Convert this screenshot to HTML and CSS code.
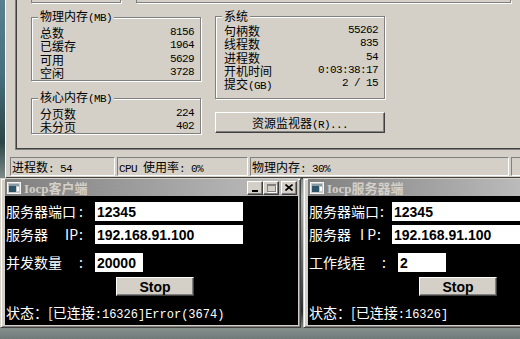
FILE: index.html
```html
<!DOCTYPE html>
<html lang="zh-CN">
<head>
    <meta charset="UTF-8">
    <title>Iocp</title>
    <link rel="stylesheet" href="styles.css">
</head>
<body>
    <div class="desktop">

        <!-- Task manager (performance tab, lower part) -->
        <div class="taskmgr">
            <div class="tabpanel">
                <div class="graphs">
                    <div class="graph graph-small"></div>
                    <div class="graph graph-wide"></div>
                </div>

                <div class="stats">
                    <div class="col">
                        <fieldset class="group g-phys">
                            <legend>物理内存<span class="v">(MB)</span></legend>
                            <div class="row"><span>总数</span><span class="v">8156</span></div>
                            <div class="row"><span>已缓存</span><span class="v">1964</span></div>
                            <div class="row"><span>可用</span><span class="v">5629</span></div>
                            <div class="row"><span>空闲</span><span class="v">3728</span></div>
                        </fieldset>
                        <fieldset class="group g-kernel">
                            <legend>核心内存<span class="v">(MB)</span></legend>
                            <div class="row"><span>分页数</span><span class="v">224</span></div>
                            <div class="row"><span>未分页</span><span class="v">402</span></div>
                        </fieldset>
                    </div>
                    <div class="col">
                        <fieldset class="group g-sys">
                            <legend>系统</legend>
                            <div class="row"><span>句柄数</span><span class="v">55262</span></div>
                            <div class="row"><span>线程数</span><span class="v">835</span></div>
                            <div class="row"><span>进程数</span><span class="v">54</span></div>
                            <div class="row"><span>开机时间</span><span class="v">0:03:38:17</span></div>
                            <div class="row"><span>提交<span class="v">(GB)</span></span><span class="v">2 / 15</span></div>
                        </fieldset>
                        <button class="btn-res">资源监视器<span class="v">(R)...</span></button>
                    </div>
                </div>
            </div>

            <div class="statusbar">
                <div class="cell cell-proc">进程数<span class="v">: 54</span></div>
                <div class="cell cell-cpu"><span class="v">CPU </span>使用率<span class="v">: 0%</span></div>
                <div class="cell cell-mem">物理内存<span class="v">: 30%</span></div>
                <div class="cell cell-rest"></div>
            </div>
        </div>

        <!-- Client window -->
        <div class="win client">
            <div class="titlebar">
                <svg class="title-icon" width="14" height="12" viewBox="0 0 14 12">
                    <rect x="0.5" y="0.5" width="13" height="11" fill="#c8c8c8" stroke="#f4f4f4"/>
                    <rect x="2" y="2" width="10" height="2" fill="#8a9aa4"/>
                    <rect x="2" y="4" width="7" height="6" fill="#2d5468"/>
                    <rect x="10" y="5" width="2" height="4" fill="#ffffff"/>
                </svg>
                <span class="title-text">Iocp客户端</span>
                <div class="caption">
                    <span class="cap-btn cap-min"><i></i></span>
                    <span class="cap-btn cap-max"><i></i></span>
                    <span class="cap-btn cap-close">
                        <svg width="8" height="7" viewBox="0 0 8 7"><path d="M0.5 0.5 L7.5 6.5 M7.5 0.5 L0.5 6.5" stroke="#000" stroke-width="1.6"/></svg>
                    </span>
                </div>
            </div>
            <div class="client-area">
                <div class="field">
                    <div class="lbl"><span>服务器端口</span></div><span class="colon">:</span>
                    <input class="input" type="text" value="12345">
                </div>
                <div class="field">
                    <div class="lbl"><span>服务器</span><span>IP</span></div><span class="colon">:</span>
                    <input class="input" type="text" value="192.168.91.100">
                </div>
                <div class="field spaced">
                    <div class="lbl"><span>并发数量</span></div><span class="colon">:</span>
                    <input class="input short" type="text" value="20000">
                </div>
                <div class="stop-row"><button class="btn-stop">Stop</button></div>
                <div class="state">状态：[已连接<span class="m">:16326]Error(3674)</span></div>
            </div>
        </div>

        <!-- Server window -->
        <div class="win server">
            <div class="titlebar">
                <svg class="title-icon" width="14" height="12" viewBox="0 0 14 12">
                    <rect x="0.5" y="0.5" width="13" height="11" fill="#c8c8c8" stroke="#f4f4f4"/>
                    <rect x="2" y="2" width="10" height="2" fill="#8a9aa4"/>
                    <rect x="2" y="4" width="7" height="6" fill="#2d5468"/>
                    <rect x="10" y="5" width="2" height="4" fill="#ffffff"/>
                </svg>
                <span class="title-text">Iocp服务器端</span>
            </div>
            <div class="client-area">
                <div class="field">
                    <div class="lbl"><span>服务器端口</span></div><span class="colon">:</span>
                    <input class="input" type="text" value="12345">
                </div>
                <div class="field">
                    <div class="lbl"><span>服务器</span><span>I P</span></div><span class="colon">:</span>
                    <input class="input" type="text" value="192.168.91.100">
                </div>
                <div class="field spaced">
                    <div class="lbl"><span>工作线程</span></div><span class="colon">:</span>
                    <input class="input short" type="text" value="2">
                </div>
                <div class="stop-row"><button class="btn-stop">Stop</button></div>
                <div class="state">状态：[已连接<span class="m">:16326]</span></div>
            </div>
        </div>

    </div>
</body>
</html>
```

FILE: styles.css
```css
* {
    box-sizing: border-box;
}

body {
    margin: 0;
    width: 520px;
    height: 339px;
    overflow: hidden;
    font-family: "Noto Sans CJK SC", sans-serif;
}

.desktop {
    position: relative;
    width: 520px;
    height: 339px;
    overflow: hidden;
    background: linear-gradient(to bottom, #5a7f90 0%, #46707e 22%, #2d4445 42%, #a9b1ae 58%, #26302f 92%, #848e8b 97%, #6f7b79 100%);
}

/* ---------- task manager ---------- */

.taskmgr {
    position: absolute;
    left: 5px;
    top: 0;
    width: 530px;
    height: 179px;
    background: #d4d0c8;
    border-left: 1px solid #ffffff;
    border-bottom: 2px solid #404040;
    color: #000;
    font-size: 12px;
}

.tabpanel {
    margin-left: 9px;
    height: 150px;
    padding-left: 15px;
    border-left: 1px solid #808080;
    border-bottom: 1px solid #808080;
    box-shadow: inset 1px -1px 0 #404040;
}

.graphs {
    display: flex;
    gap: 15px;
}

.graph {
    height: 3px;
    border: 1px solid #808080;
    border-top: 0;
    box-shadow: 1px 1px 0 #ffffff;
}

.graph-small {
    width: 90px;
}

.graph-wide {
    width: 375px;
}

.stats {
    display: flex;
    gap: 14px;
    margin-top: 7px;
}

.col {
    width: 170px;
}

.group {
    margin: 0;
    min-width: 0;
    width: 170px;
    padding: 2px 6px 0 8px;
    border: 1px solid #808080;
    box-shadow: 1px 1px 0 #ffffff, inset 1px 1px 0 #ffffff;
}

.group legend {
    margin-left: -2px;
    padding: 0 2px;
    font-size: 12px;
    line-height: 12px;
    background: #d4d0c8;
}

.g-phys {
    height: 71px;
}

.g-kernel {
    height: 43px;
    margin-top: 10px;
}

.g-sys {
    height: 89px;
}

.row {
    display: flex;
    justify-content: space-between;
    height: 13.3px;
    line-height: 13.3px;
    white-space: nowrap;
}

.v {
    font-family: "Liberation Mono", monospace;
    font-size: 11px;
    letter-spacing: -0.6px;
}

.btn-res {
    display: block;
    width: 170px;
    height: 21px;
    margin-top: 13px;
    padding: 0;
    background: #d4d0c8;
    border: 1px solid;
    border-color: #ffffff #404040 #404040 #ffffff;
    box-shadow: inset -1px -1px 0 #808080;
    font-family: "Noto Sans CJK SC", sans-serif;
    font-size: 12px;
    color: #000;
}

.statusbar {
    display: flex;
    gap: 2px;
    height: 19px;
    margin-top: 7px;
    padding-left: 4px;
}

.cell {
    height: 19px;
    padding-left: 1px;
    line-height: 17px;
    border: 1px solid;
    border-color: #808080 #ffffff #ffffff #808080;
    white-space: nowrap;
}

.cell-proc {
    width: 105px;
}

.cell-cpu {
    width: 131px;
}

.cell-mem {
    width: 259px;
}

.cell-rest {
    flex: 1;
}

/* ---------- app windows ---------- */

.win {
    position: absolute;
    top: 178px;
    height: 150px;
    display: flex;
    flex-direction: column;
    padding: 0 2px 3px 4px;
    background: #d4d0c8;
    border: 1px solid;
    border-color: #d4d0c8 #404040 #404040 #d4d0c8;
    box-shadow: inset 1px 1px 0 #ffffff, inset -1px -1px 0 #808080;
}

.client {
    left: 0;
    width: 301px;
}

.server {
    left: 303px;
    width: 240px;
}

.titlebar {
    display: flex;
    align-items: center;
    height: 17px;
    padding: 0 1px 0 2px;
    background: linear-gradient(to right, #808080, #c0c0c0);
    color: #d4d0c8;
    font: bold 13px "Liberation Serif", "Noto Sans CJK SC", serif;
    white-space: nowrap;
}

.title-icon {
    flex: none;
    margin-right: 3px;
}

.caption {
    display: flex;
    margin-left: auto;
}

.cap-btn {
    position: relative;
    display: flex;
    align-items: center;
    justify-content: center;
    width: 16px;
    height: 14px;
    background: #d4d0c8;
    border: 1px solid;
    border-color: #ffffff #404040 #404040 #ffffff;
    box-shadow: inset -1px -1px 0 #808080;
}

.cap-min i {
    display: block;
    width: 6px;
    height: 2px;
    margin-top: 6px;
    background: #000;
}

.cap-max i {
    display: block;
    width: 9px;
    height: 8px;
    border: 1px solid #808080;
    border-top-width: 2px;
    box-shadow: 1px 1px 0 #ffffff;
}

.cap-close {
    margin-left: 2px;
}

.client-area {
    flex: 1;
    padding: 6px 0 0 1px;
    background: #000;
    color: #fff;
    font-size: 14px;
}

.field {
    display: flex;
    align-items: center;
    height: 19px;
}

.field + .field {
    margin-top: 4px;
}

.field.spaced {
    margin-top: 9px;
}

.lbl {
    display: flex;
    justify-content: space-between;
    width: 72px;
    line-height: 19px;
    white-space: nowrap;
}

.colon {
    width: 17px;
    padding-left: 1px;
    line-height: 19px;
}

.input {
    width: 148px;
    height: 19px;
    margin: 0;
    padding: 0 2px;
    border: 0;
    outline: none;
    background: #fff;
    color: #000;
    font: bold 14px "Liberation Sans", sans-serif;
}

.input.short {
    width: 48px;
}

.stop-row {
    margin-top: 5px;
    padding-left: 110px;
}

.btn-stop {
    display: block;
    width: 78px;
    height: 19px;
    padding: 0;
    background: #d4d0c8;
    border: 1px solid;
    border-color: #ffffff #404040 #404040 #ffffff;
    box-shadow: inset -1px -1px 0 #808080;
    color: #000;
    font: bold 14px "Liberation Sans", sans-serif;
}

.state {
    margin-top: 7px;
    line-height: 19px;
    white-space: nowrap;
}

.state .m {
    font-family: "Liberation Mono", monospace;
    font-size: 12px;
}
```
